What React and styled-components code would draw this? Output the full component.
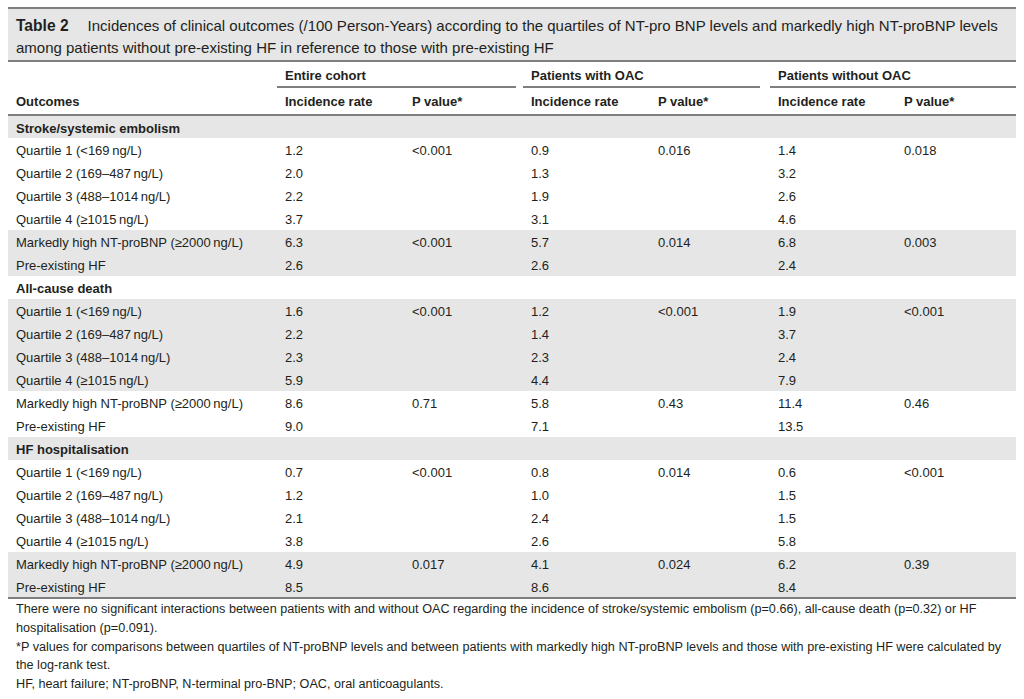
import React from "react";
import styled, { createGlobalStyle } from "styled-components";

const GlobalStyle = createGlobalStyle`
  body {
    margin: 0;
    background: #ffffff;
    color: #231f20;
    font-family: "Liberation Sans", Arial, sans-serif;
  }
`;

const Page = styled.div`
  width: 1008px;
  padding: 7px 8px 0 8px;
`;

const Caption = styled.div`
  background: #e6e6e6;
  border-top: 2px solid #7f7f7f;
  border-bottom: 2px solid #7f7f7f;
  padding: 6px 8px 1px 8px;
  font-size: 15px;
  line-height: 22px;
  white-space: nowrap;
`;

const CaptionLabel = styled.span`
  font-weight: bold;
  font-size: 15.6px;
  margin-right: 19px;
`;

const Table = styled.table`
  width: 1008px;
  border-collapse: collapse;
  table-layout: fixed;
  font-size: 13px;
  border-bottom: 2px solid #7f7f7f;
`;

const HeadRow = styled.tr`
  height: ${(p) => p.$h}px;
  border-bottom: ${(p) => (p.$last ? "2px solid #7f7f7f" : "none")};
`;

const Th = styled.th`
  text-align: left;
  font-weight: bold;
  padding: 0 0 0 8px;
  vertical-align: middle;
  white-space: nowrap;
`;

const GroupTh = styled.th`
  text-align: left;
  font-weight: bold;
  padding: 0;
  vertical-align: bottom;
`;

const GroupLabel = styled.div`
  padding: 0 0 3px 8px;
  margin-right: ${(p) => p.$gap}px;
  border-bottom: 2px solid #7f7f7f;
`;

const Row = styled.tr`
  height: 23px;
  background: ${(p) => (p.$shade ? "#e6e6e6" : "#ffffff")};
`;

const Td = styled.td`
  padding: 2px 0 0 8px;
  white-space: nowrap;
  font-weight: ${(p) => (p.$bold ? "bold" : "normal")};
`;

const Notes = styled.div`
  font-size: 12.65px;
  line-height: 18.8px;
  padding: 1px 0 0 8px;
  white-space: nowrap;
`;

const sections = [
  {
    title: "Stroke/systemic embolism",
    shadeTitle: true,
    rows: [
      ["Quartile 1 (<169\u2009ng/L)", "1.2", "<0.001", "0.9", "0.016", "1.4", "0.018"],
      ["Quartile 2 (169\u2013487\u2009ng/L)", "2.0", "", "1.3", "", "3.2", ""],
      ["Quartile 3 (488\u20131014\u2009ng/L)", "2.2", "", "1.9", "", "2.6", ""],
      ["Quartile 4 (\u22651015\u2009ng/L)", "3.7", "", "3.1", "", "4.6", ""],
      ["Markedly high NT-proBNP (\u22652000\u2009ng/L)", "6.3", "<0.001", "5.7", "0.014", "6.8", "0.003"],
      ["Pre-existing HF", "2.6", "", "2.6", "", "2.4", ""],
    ],
  },
  {
    title: "All-cause death",
    shadeTitle: false,
    rows: [
      ["Quartile 1 (<169\u2009ng/L)", "1.6", "<0.001", "1.2", "<0.001", "1.9", "<0.001"],
      ["Quartile 2 (169\u2013487\u2009ng/L)", "2.2", "", "1.4", "", "3.7", ""],
      ["Quartile 3 (488\u20131014\u2009ng/L)", "2.3", "", "2.3", "", "2.4", ""],
      ["Quartile 4 (\u22651015\u2009ng/L)", "5.9", "", "4.4", "", "7.9", ""],
      ["Markedly high NT-proBNP (\u22652000\u2009ng/L)", "8.6", "0.71", "5.8", "0.43", "11.4", "0.46"],
      ["Pre-existing HF", "9.0", "", "7.1", "", "13.5", ""],
    ],
  },
  {
    title: "HF hospitalisation",
    shadeTitle: true,
    rows: [
      ["Quartile 1 (<169\u2009ng/L)", "0.7", "<0.001", "0.8", "0.014", "0.6", "<0.001"],
      ["Quartile 2 (169\u2013487\u2009ng/L)", "1.2", "", "1.0", "", "1.5", ""],
      ["Quartile 3 (488\u20131014\u2009ng/L)", "2.1", "", "2.4", "", "1.5", ""],
      ["Quartile 4 (\u22651015\u2009ng/L)", "3.8", "", "2.6", "", "5.8", ""],
      ["Markedly high NT-proBNP (\u22652000\u2009ng/L)", "4.9", "0.017", "4.1", "0.024", "6.2", "0.39"],
      ["Pre-existing HF", "8.5", "", "8.6", "", "8.4", ""],
    ],
  },
];

const colWidths = [269, 127, 119, 127, 120, 126, 120];

export default function App() {
  return (
    <Page>
      <GlobalStyle />
      <Caption>
        <CaptionLabel>Table 2</CaptionLabel>
        Incidences of clinical outcomes (/100 Person-Years) according to the quartiles of NT-pro BNP levels and markedly high NT-proBNP levels
        <br />
        among patients without pre-existing HF in reference to those with pre-existing HF
      </Caption>
      <Table>
        <colgroup>
          {colWidths.map((w, i) => (
            <col key={i} style={{ width: w }} />
          ))}
        </colgroup>
        <thead>
          <HeadRow $h={26}>
            <Th />
            <GroupTh colSpan={2}>
              <GroupLabel $gap={7}>Entire cohort</GroupLabel>
            </GroupTh>
            <GroupTh colSpan={2}>
              <GroupLabel $gap={10}>Patients with OAC</GroupLabel>
            </GroupTh>
            <GroupTh colSpan={2}>
              <GroupLabel $gap={0}>Patients without OAC</GroupLabel>
            </GroupTh>
          </HeadRow>
          <HeadRow $h={27} $last>
            <Th>Outcomes</Th>
            <Th>Incidence rate</Th>
            <Th>P value*</Th>
            <Th>Incidence rate</Th>
            <Th>P value*</Th>
            <Th>Incidence rate</Th>
            <Th>P value*</Th>
          </HeadRow>
        </thead>
        <tbody>
          {sections.map((s) => (
            <React.Fragment key={s.title}>
              <Row $shade={s.shadeTitle}>
                <Td $bold colSpan={7}>
                  {s.title}
                </Td>
              </Row>
              {s.rows.map((r, i) => (
                <Row key={i} $shade={i < 4 ? !s.shadeTitle : s.shadeTitle}>
                  {r.map((c, j) => (
                    <Td key={j}>{c}</Td>
                  ))}
                </Row>
              ))}
            </React.Fragment>
          ))}
        </tbody>
      </Table>
      <Notes>
        There were no significant interactions between patients with and without OAC regarding the incidence of stroke/systemic embolism (p=0.66), all-cause death (p=0.32) or HF
        <br />
        hospitalisation (p=0.091).
        <br />
        *P values for comparisons between quartiles of NT-proBNP levels and between patients with markedly high NT-proBNP levels and those with pre-existing HF were calculated by
        <br />
        the log-rank test.
        <br />
        HF, heart failure; NT-proBNP, N-terminal pro-BNP; OAC, oral anticoagulants.
      </Notes>
    </Page>
  );
}
